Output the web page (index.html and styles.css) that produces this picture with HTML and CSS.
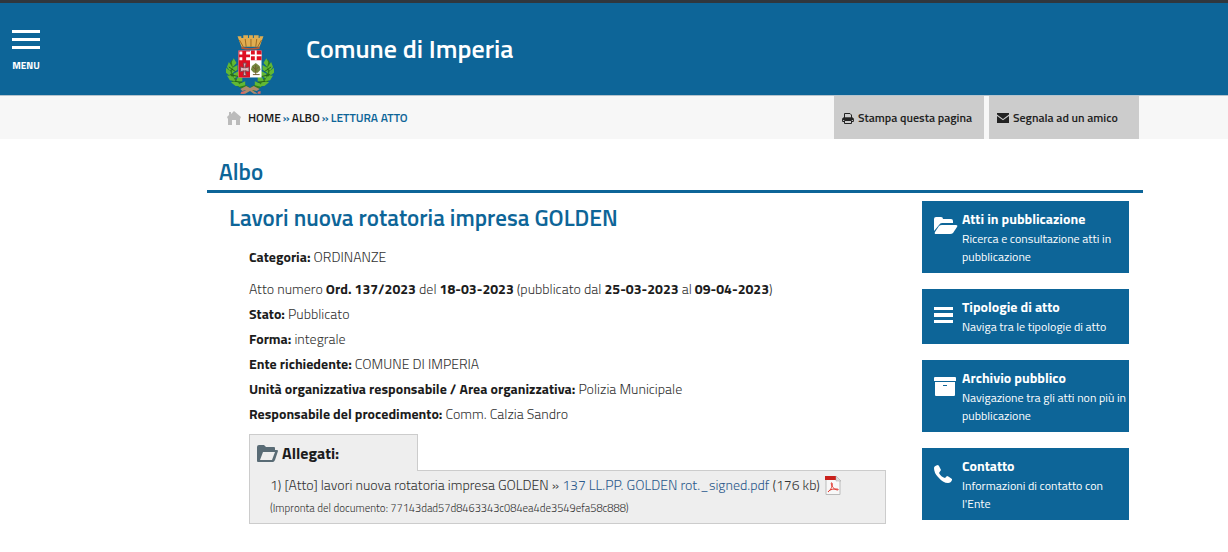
FILE: index.html
```html
<!DOCTYPE html>
<html lang="it">
  <head>
    <meta charset="UTF-8" />
    <meta name="viewport" content="width=device-width, initial-scale=1.0" />
    <title>Comune di Imperia - Albo - Lettura atto</title>
    <link rel="stylesheet" href="styles.css">
  </head>
  <body>
    <header>
      <button class="menu-btn" type="button">
        <span class="bar"></span>
        <span class="bar"></span>
        <span class="bar"></span>
        <span class="menu-label">MENU</span>
      </button>
      <a class="brand" href="#">
        <svg class="crest" viewBox="0 0 50 61" aria-hidden="true">
          <!-- crown -->
          <path d="M12 1h4v2h2V0h5v3h1V0h4v3h1V0h5v3h1V1h4l-4 11H16z" fill="#e0ad50" />
          <path d="M14 5l4 7M20 4l1 8M26 4v8M32 4l-1 8M37 5l-4 7" stroke="#9a671f" stroke-width="1" fill="none" />
          <path d="M16 12q9 3 19 0v2q-10 2-19 0z" fill="#c0562f" />
          <!-- laurel and oak -->
          <path d="M8 27Q-3 46 23 56M42 27Q53 46 27 56" stroke="#2f7d1c" stroke-width="5" fill="none" />
          <g fill="#62b834">
            <path d="M8 24l3 5-4 4-1-5zM3 28l4 6-3 3-3-4zM12 31l0 5-6 4 1-6zM0 34l5 4 0 5-5-4zM14 37l1 5-7 3 0-5zM1 42l6 1 3 5-6-1zM17 43l0 5-7 2 2-6zM5 49l6-1 5 5-6 0zM20 48l0 4-7 2 2-4z" />
            <path d="M42 24l-3 5 4 4 1-5zM47 28l-4 6 3 3 3-4zM38 31l0 5 6 4-1-6zM50 34l-5 4 0 5 5-4zM36 37l-1 5 7 3 0-5zM49 42l-6 1-3 5 6-1zM33 43l0 5 7 2-2-6zM45 49l-6-1-5 5 6 0zM30 48l0 4 7 2-2-4z" />
          </g>
          <path d="M3 33l7 5M4 41l9 2M9 48l8 1M47 33l-7 5M46 41l-9 2M41 48l-8 1" stroke="#245f18" stroke-width="1" />
          <!-- shield -->
          <path d="M13 16h24v28H13z" fill="#fff" />
          <path d="M13 16h12v28H13zM26 16h11v10H26z" fill="#df1022" />
          <path d="M31 16v10M26 21h11" stroke="#fff" stroke-width="2" />
          <path d="M14 17h3v3h-3zM21 17h4v3h-4zM14 23h3v3h-3zM21 23h4v3h-4z" fill="#fff" />
          <path d="M18 29h3l-1 5 4-1v5l-4-1 1 5h-3l1-5-4 1v-5l4 1z" fill="#e0b8bc" stroke="#83444c" stroke-width="1" />
          <path d="M31 29l4 3 1 4-3 3h-4l-3-3 1-4z" fill="#75893f" />
          <path d="M31 31v10M28 41h7M28 33l3 3 3-3" stroke="#6f5b2c" stroke-width="1" fill="none" />
          <!-- ribbon -->
          <path d="M15 56l6-3 4 2 4-2 6 3-3 2-5-1 6 4h-4l-4-3-5 3h-5l6-4-4 1z" fill="#b08a6c" />
          <path d="M16 59l4-1-1 3h-4zM33 59l3-1v3h-3z" fill="#d96a65" />
        </svg>
        <h1>Comune di Imperia</h1>
      </a>
    </header>

    <div class="subbar">
      <nav class="breadcrumb" aria-label="Percorso">
        <svg class="home" viewBox="0 0 14 14" aria-hidden="true">
          <path d="M7 0l7 6-1 2V14H9V9H5v5H1V8L0 6l2-2V1h2v2z" fill="#bbb" />
        </svg>
        <a href="#">HOME</a> &raquo; <a href="#">ALBO</a> &raquo; <span>LETTURA ATTO</span>
      </nav>
      <div class="tools">
        <a href="#">
          <svg viewBox="0 0 12 12" aria-hidden="true">
            <path d="M2.5 6V1.500H8l1.500 1.500V6M2 9.500H.6V7Q.6 5.800 2 5.800h8q1.400 0 1.400 1.200v2.500H10M2.500 8.500h7v3h-7z" fill="none" stroke="#222" />
            <path d="M1 6h10v2H1z" fill="#222" />
          </svg>
          Stampa questa pagina
        </a>
        <a href="#">
          <svg viewBox="0 0 12 12" aria-hidden="true">
            <path d="M0 1h12v1.500L6 7 0 2.500zM0 4l6 4.300L12 4v7H0z" fill="#222" />
          </svg>
          Segnala ad un amico
        </a>
      </div>
    </div>

    <main>
      <h2>Albo</h2>
      <div class="columns">
        <article>
          <h3>Lavori nuova rotatoria impresa GOLDEN</h3>
          <div class="details">
            <p class="category"><strong>Categoria:</strong> ORDINANZE</p>
            <p>Atto numero <strong>Ord. 137/2023</strong> del <strong>18-03-2023</strong> (pubblicato dal <strong>25-03-2023</strong> al <strong>09-04-2023</strong>)</p>
            <p><strong>Stato:</strong> Pubblicato</p>
            <p><strong>Forma:</strong> integrale</p>
            <p><strong>Ente richiedente:</strong> COMUNE DI IMPERIA</p>
            <p><strong>Unità organizzativa responsabile / Area organizzativa:</strong> Polizia Municipale</p>
            <p><strong>Responsabile del procedimento:</strong> Comm. Calzia Sandro</p>
          </div>

          <section class="attachments">
            <h4>
              <svg viewBox="0 0 21 17" aria-hidden="true">
                <path d="M2 0h5l2 2h8q1 0 1 1v2h2q1 0 1 1l-3 9q-1 2-2 2H1q-1 0-1-1V2q0-2 2-2zM6 7L3 15h12l3-8z" fill="#596b75" fill-rule="evenodd" />
              </svg>
              Allegati:
            </h4>
            <div class="files">
              <p class="file">
                <span>1) [Atto] lavori nuova rotatoria impresa GOLDEN &raquo; <a href="#">137 LL.PP. GOLDEN rot._signed.pdf</a> (176 kb)</span>
                <svg viewBox="0 0 16 19" aria-hidden="true">
                  <path d="M1 .5h10l4 4v14H1z" fill="#f8f8f8" stroke="#bbb" />
                  <path d="M0 0h11v4H0z" fill="#c9201b" />
                  <path d="M11 0v5h5z" fill="#ddd" stroke="#aaa" stroke-width=".5" />
                  <path d="M3 16c3-2 5-7 4-9-1-1-1 1 0 3 1 2 3 4 6 4 1-1-1-1-3-1-3 0-6 1-7 3z" fill="none" stroke="#e23b32" />
                </svg>
              </p>
              <p class="hash">(Impronta del documento: 77143dad57d8463343c084ea4de3549efa58c888)</p>
            </div>
          </section>
        </article>

        <aside>
          <a class="card" href="#">
            <svg viewBox="0 0 24 24" aria-hidden="true">
              <path d="M0 5q0-2 2-2h5q2 0 2 2h8q2 0 2 2v2H8q-2 0-3 2l-5 6z" fill="#fff" />
              <path d="M8 11h14q2 0 1 2l-4 6q-1 1-3 1H2q-2 0-1-2l4-6q1-1 3-1z" fill="#fff" />
            </svg>
            <span class="card-text"><strong>Atti in pubblicazione</strong>Ricerca e consultazione atti in pubblicazione</span>
          </a>
          <a class="card" href="#">
            <svg viewBox="0 0 24 24" aria-hidden="true">
              <path d="M0 5h19v3H0zM0 11h19v4H0zM0 18h19v3H0z" fill="#fff" />
            </svg>
            <span class="card-text"><strong>Tipologie di atto</strong>Naviga tra le tipologie di atto</span>
          </a>
          <a class="card" href="#">
            <svg viewBox="0 0 24 24" aria-hidden="true">
              <path d="M1 4h20q1 0 1 1v3H0V5q0-1 1-1zM1 9h20v13q0 1-1 1H2q-1 0-1-1zM9 12v1h4v-1z" fill="#fff" fill-rule="evenodd" />
            </svg>
            <span class="card-text"><strong>Archivio pubblico</strong>Navigazione tra gli atti non più in pubblicazione</span>
          </a>
          <a class="card" href="#">
            <svg viewBox="0 0 24 24" aria-hidden="true">
              <path d="M0 7q0-2 4-3l1 1 2 4-2 3q2 4 6 5l2-2q1 0 5 3v1q-1 3-4 3Q9 22 4 16 0 12 0 7z" fill="#fff" />
            </svg>
            <span class="card-text"><strong>Contatto</strong>Informazioni di contatto con l'Ente</span>
          </a>
        </aside>
      </div>
    </main>
  </body>
</html>
```
FILE: styles.css
```css
/* Base */
* {
  box-sizing: border-box;
}

body {
  margin: 0;
  background: #fff;
  color: #333;
  font-family: "Titillium Web", Roboto, "Liberation Sans", sans-serif;
  font-size: 14px;
  font-weight: 300;
}

h1, h2, h3, h4, p {
  margin: 0;
}

a {
  text-decoration: none;
}

strong {
  color: #1c1c1c;
  font-weight: 700;
}

/* Header */
header {
  display: flex;
  height: 96px;
  background: #0d6598;
  border-top: 3px solid #30373d;
  border-bottom: 1px solid #b5c4ce;
}

.menu-btn {
  display: flex;
  flex-direction: column;
  align-items: center;
  gap: 5px;
  width: 52px;
  padding: 27px 12px 0;
  background: none;
  border: none;
  color: #fff;
  font-family: inherit;
  cursor: pointer;
}

.bar {
  width: 28px;
  height: 3px;
  background: #fff;
}

.menu-label {
  margin-top: 5px;
  font-size: 10px;
  line-height: 14px;
  font-weight: 700;
}

.brand {
  display: flex;
  align-items: flex-start;
  gap: 32px;
  margin-left: 174px;
  padding-top: 31px;
  color: #fff;
}

.crest {
  width: 48px;
  height: 61px;
}

h1 {
  font-size: 26px;
  line-height: 30px;
  font-weight: 600;
}

/* Breadcrumb bar */
.subbar {
  display: flex;
  justify-content: space-between;
  height: 43px;
  padding: 0 89px 0 227px;
  background: #f7f7f7;
}

.breadcrumb {
  display: flex;
  align-items: center;
  gap: 2px;
  color: #0d6598;
  font-size: 12px;
  font-weight: 600;
}

.breadcrumb a {
  color: #1c1c1c;
}

.home {
  width: 14px;
  height: 14px;
  margin-right: 5px;
}

.tools {
  display: flex;
  gap: 5px;
}

.tools a {
  display: flex;
  align-items: center;
  gap: 4px;
  width: 150px;
  padding-left: 8px;
  background: #ccc;
  color: #222;
  font-size: 12px;
  font-weight: 600;
}

.tools svg {
  width: 12px;
  height: 12px;
}

/* Content */
main {
  padding: 18px 85px 24px 207px;
}

h2 {
  padding: 0 12px 3px;
  border-bottom: 3px solid #0d6598;
  color: #0d6598;
  font-size: 23px;
  line-height: 30px;
  font-weight: 600;
}

.columns {
  display: flex;
  gap: 36px;
  padding: 8px 14px 0 22px;
}

article {
  flex: 1;
}

h3 {
  color: #0d6598;
  font-size: 23px;
  line-height: 34px;
  font-weight: 600;
}

.details {
  padding: 9px 0 8px 20px;
}

.details p {
  line-height: 25px;
}

.details .category {
  margin-bottom: 7px;
}

/* Attachments */
.attachments {
  margin-left: 20px;
}

h4 {
  position: relative;
  display: flex;
  align-items: center;
  gap: 4px;
  width: 169px;
  height: 37px;
  margin-bottom: -1px;
  padding-left: 7px;
  background: #eee;
  border: 1px solid #ccc;
  border-bottom: none;
  color: #1c1c1c;
  font-size: 16px;
  font-weight: 700;
}

h4 svg {
  width: 21px;
  height: 17px;
}

.files {
  padding: 4px 20px;
  background: #eee;
  border: 1px solid #ccc;
}

.file {
  display: flex;
  align-items: center;
  gap: 5px;
  line-height: 20px;
}

.file a {
  color: #2c5a8c;
}

.file svg {
  width: 16px;
  height: 19px;
}

.hash {
  margin-top: 2px;
  font-size: 11px;
  line-height: 22px;
}

/* Side cards */
aside {
  display: flex;
  flex-direction: column;
  gap: 16px;
  width: 207px;
}

.card {
  display: flex;
  gap: 4px;
  min-height: 55px;
  padding: 8px 0 7px 12px;
  background: #0d6598;
  color: #fff;
  font-size: 12px;
  line-height: 18px;
  font-weight: 400;
}

.card svg {
  flex: none;
  width: 24px;
  height: 24px;
  margin-top: 5px;
}

.card-text strong {
  display: block;
  margin-bottom: 1px;
  color: #fff;
  font-size: 14px;
  line-height: 20px;
}
```
